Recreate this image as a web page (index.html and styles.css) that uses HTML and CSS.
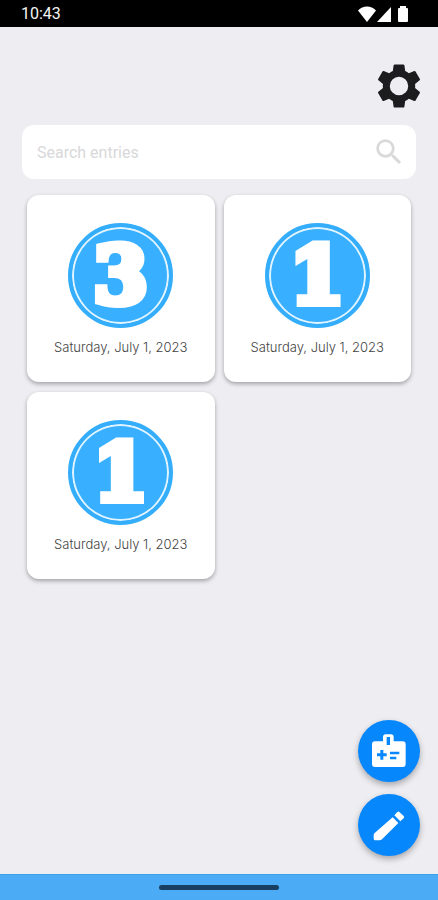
FILE: index.html
```html
<!DOCTYPE html>
<html lang="en">
<head>
<meta charset="utf-8">
<meta name="viewport" content="width=device-width, initial-scale=1">
<title>Entries</title>
<link rel="stylesheet" href="styles.css">
</head>
<body>
<div class="status">
  <time>10:43</time>
  <svg class="status-icons" viewBox="0 0 50 16" aria-hidden="true">
    <path d="M9 16 0 4.5C5-1 13-1 18 4.5Z"/>
    <path d="M33 1v15H19Z"/>
    <path d="M42 2V0h6v2h1q1 0 1 1v12q0 1-1 1h-8q-1 0-1-1V3q0-1 1-1Z"/>
  </svg>
</div>
<header class="toolbar">
  <button class="icon-button" type="button" aria-label="Settings">
    <svg viewBox="0 0 24 24"><path d="M19.14 12.94c.04-.3.06-.61.06-.94 0-.32-.02-.64-.07-.94l2.03-1.58c.18-.14.23-.41.12-.61l-1.92-3.32c-.12-.22-.37-.29-.59-.22l-2.39.96c-.5-.38-1.03-.7-1.62-.94l-.36-2.54c-.04-.24-.24-.41-.48-.41h-3.84c-.24 0-.43.17-.47.41l-.36 2.54c-.59.24-1.13.57-1.62.94l-2.39-.96c-.22-.08-.47 0-.59.22L2.74 8.87c-.12.21-.08.47.12.61l2.03 1.58c-.05.3-.09.63-.09.94s.02.64.07.94l-2.03 1.58c-.18.14-.23.41-.12.61l1.92 3.32c.12.22.37.29.59.22l2.39-.96c.5.38 1.03.7 1.62.94l.36 2.54c.05.24.24.41.48.41h3.84c.24 0 .44-.17.47-.41l.36-2.54c.59-.24 1.13-.56 1.62-.94l2.39.96c.22.08.47 0 .59-.22l1.92-3.32c.12-.22.07-.47-.12-.61l-2.01-1.58zM12 16.1a4.1 4.1 0 1 1 0-8.2 4.1 4.1 0 0 1 0 8.2z"/></svg>
  </button>
</header>
<main class="content">
  <form class="search" role="search">
    <input type="search" placeholder="Search entries" aria-label="Search entries">
    <button class="search-button" type="button" aria-label="Search">
      <svg viewBox="0 0 24 24"><path d="M15.5 14h-.79l-.28-.27A6.471 6.471 0 0 0 16 9.500 6.500 6.500 0 1 0 9.500 16c1.610 0 3.090-.59 4.230-1.570l.27.28v.79l5 4.990L20.490 19l-4.990-5zm-6 0C7.010 14 5 11.990 5 9.500S7.010 5 9.500 5 14 7.010 14 9.500 11.990 14 9.500 14z"/></svg>
    </button>
  </form>
  <section class="cards" aria-label="Entries">
    <article class="card"><div class="badge"><span>3</span></div><time>Saturday, July 1, 2023</time></article>
    <article class="card"><div class="badge"><span>1</span></div><time>Saturday, July 1, 2023</time></article>
    <article class="card"><div class="badge"><span>1</span></div><time>Saturday, July 1, 2023</time></article>
  </section>
  <div class="actions">
    <button class="fab" type="button" aria-label="Badges">
      <svg viewBox="0 0 102 102">
        <path fill-rule="evenodd" d="M33 22V9q0-8 8-8h16q8 0 8 8v13h27q9 0 9 9v59q0 9-9 9H9q-9 0-9-9V31q0-9 9-9ZM44 9v24h10V9ZM25 48v10H15v9h10v10h9V67h10v-9H34V48ZM54 53v8h28v-8ZM54 68v8h19v-8Z"/>
      </svg>
    </button>
    <button class="fab" type="button" aria-label="New entry">
      <svg viewBox="0 0 102 102">
        <path d="M62 28 79 45 30 94Q27 97 22 97H10Q5 97 5 92V82Q5 78 8 75ZM67 22 76 12Q79 9 82 12L95 24Q98 27 95 31L85 40Z"/>
      </svg>
    </button>
  </div>
</main>
<div class="navbar"><span class="handle"></span></div>
</body>
</html>
```
FILE: styles.css
```css
* { box-sizing: border-box; }

body {
  margin: 0;
  min-height: 100vh;
  display: flex;
  flex-direction: column;
  background: #eeedf2;
  font-family: Roboto, "Liberation Sans", sans-serif;
}

button {
  display: grid;
  place-items: center;
  padding: 0;
  border: 0;
  background: none;
}

.status {
  display: flex;
  align-items: center;
  justify-content: space-between;
  height: 27px;
  padding: 0 30px 0 21px;
  background: #000;
  color: #f4f4f4;
  font-size: 16px;
  line-height: 28px;
}

.status-icons {
  width: 50px;
  height: 16px;
  fill: #fff;
}

.toolbar {
  display: flex;
  justify-content: flex-end;
  padding: 32px 12px 12px;
}

.icon-button svg {
  display: block;
  width: 54px;
  height: 54px;
  fill: #1c1c1e;
}

.content {
  position: relative;
  flex: 1;
  padding: 0 22px;
}

.search {
  display: flex;
  align-items: center;
  height: 54px;
  padding: 0 10px 0 15px;
  border-radius: 12px;
  background: #fff;
}

.search input {
  flex: 1;
  min-width: 0;
  padding: 0;
  border: 0;
  outline: 0;
  background: none;
  font: 400 16px Roboto, "Liberation Sans", sans-serif;
}

.search input::placeholder { color: #d8d8da; }

.search-button svg {
  width: 34px;
  height: 34px;
  fill: #d9d9db;
}

.cards {
  display: grid;
  grid-template-columns: 1fr 1fr;
  gap: 10px 9px;
  padding: 16px 5px;
}

.card {
  display: flex;
  flex-direction: column;
  align-items: center;
  gap: 9px;
  height: 187px;
  padding-top: 28px;
  border-radius: 12px;
  background: #fff;
  box-shadow: 0 2px 4px rgba(0, 0, 0, 0.32);
}

.card time {
  color: #444;
  font: 300 13px/20px Inter, sans-serif;
  white-space: nowrap;
}

.badge {
  display: grid;
  place-items: center;
  width: 105px;
  height: 105px;
  border: 4px solid #34adfb;
  border-radius: 50%;
  background: #38b0ff;
  box-shadow: inset 0 0 0 2px #e2f4ff;
  color: #fff;
  font: 700 78px/96px "DejaVu Serif", serif;
  -webkit-text-stroke: 8px #fff;
}

.actions {
  position: absolute;
  right: 18px;
  bottom: 18px;
  display: grid;
  gap: 12px;
}

.fab {
  width: 62px;
  height: 62px;
  border-radius: 50%;
  background: #0787fc;
  box-shadow: 0 3px 6px rgba(0, 0, 0, 0.3);
}

.fab svg {
  width: 34px;
  height: 34px;
  fill: #fff;
}

.navbar {
  display: flex;
  justify-content: center;
  height: 26px;
  padding-top: 10px;
  border-top: 1px solid #36a4e6;
  background: #4cabf5;
}

.handle {
  width: 120px;
  height: 5px;
  border-radius: 3px;
  background: #183f60;
}
```
